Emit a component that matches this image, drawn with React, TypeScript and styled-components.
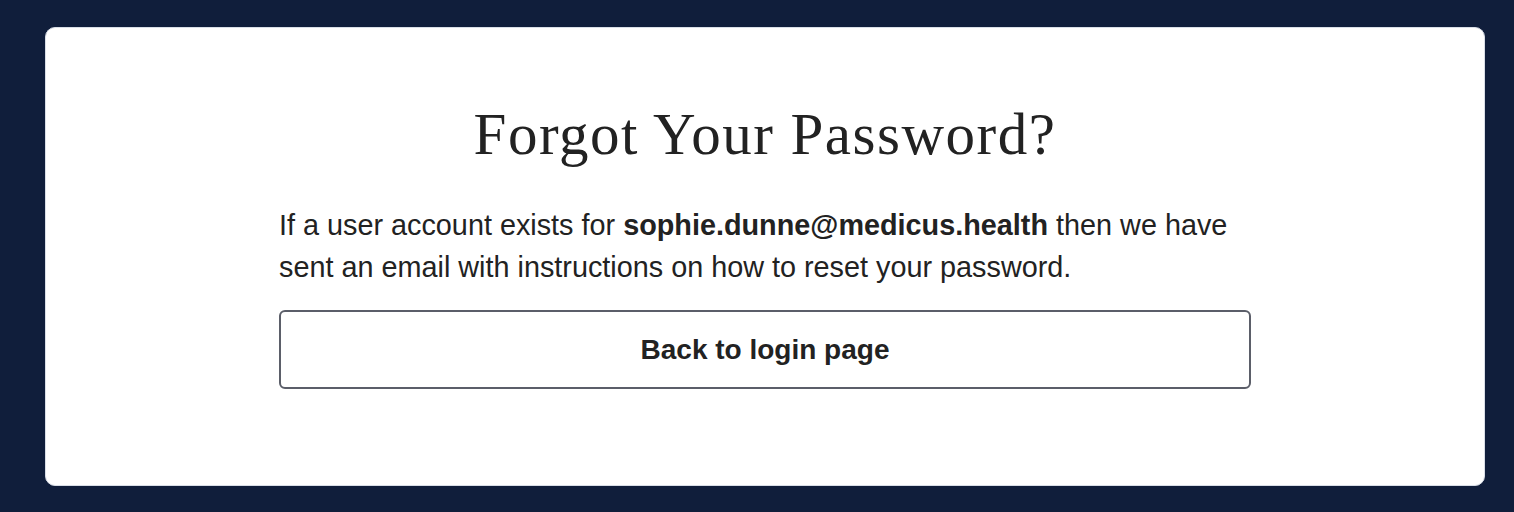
import React from "react";
import styled, { createGlobalStyle } from "styled-components";

const Global = createGlobalStyle`
  html, body { margin: 0; padding: 0; background: #101e3b; }
  body { font-family: "Liberation Sans", Arial, sans-serif; }
  * { box-sizing: border-box; }
`;

const Page = styled.div`
  min-height: 512px;
  padding: 27px 29px 26px 45px;
  display: flex;
`;

const Card = styled.main`
  flex: 1;
  height: 459px;
  background: #ffffff;
  border: 1px solid #d9dee7;
  border-radius: 10px;
  display: flex;
  justify-content: center;
  padding-top: 71px;
`;

const Content = styled.div`
  width: 972px;
  display: flex;
  flex-direction: column;
`;

const Title = styled.h1`
  margin: 0;
  text-align: center;
  font-family: "Liberation Serif", Georgia, serif;
  font-weight: 400;
  font-size: 59px;
  line-height: 71px;
  letter-spacing: 1.5px;
  color: #222222;
`;

const Message = styled.p`
  margin: 34px 0 0;
  font-size: 28.8px;
  line-height: 42px;
  color: #222222;
  strong { font-weight: 700; }
`;

const BackButton = styled.button`
  margin-top: 22px;
  height: 79px;
  width: 100%;
  background: #ffffff;
  border: 2px solid #5b5e69;
  border-radius: 6px;
  font-family: "Liberation Sans", Arial, sans-serif;
  font-weight: 700;
  font-size: 28px;
  color: #222222;
  cursor: pointer;
`;

export default function App() {
  return (
    <>
      <Global />
      <Page>
        <Card>
          <Content>
            <Title>Forgot Your Password?</Title>
            <Message>
              If a user account exists for <strong>sophie.dunne@medicus.health</strong> then we have
              sent an email with instructions on how to reset your password.
            </Message>
            <BackButton type="button">Back to login page</BackButton>
          </Content>
        </Card>
      </Page>
    </>
  );
}
